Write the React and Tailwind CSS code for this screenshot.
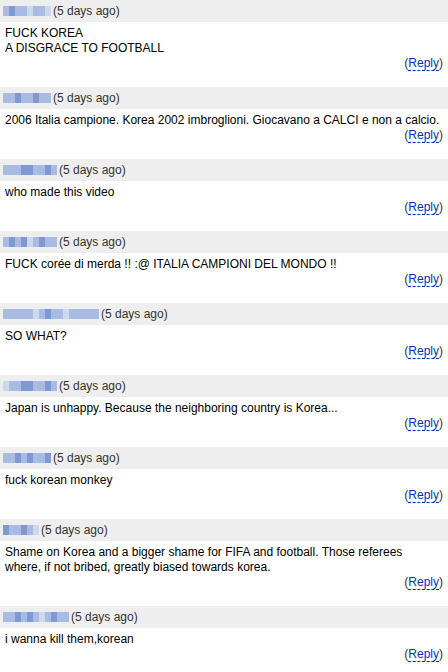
import React from 'react';

const comments = [
  { name: [1, 2, 1, 1, 0, 1, 1, 0], lines: ['FUCK KOREA', 'A DISGRACE TO FOOTBALL'] },
  { name: [1, 1, 2, 1, 1, 2, 1, 1], lines: ['2006 Italia campione. Korea 2002 imbroglioni. Giocavano a CALCI e non a calcio.'] },
  { name: [1, 1, 1, 2, 2, 1, 1, 2, 1], lines: ['who made this video'] },
  { name: [1, 2, 1, 2, 0, 1, 2, 1, 1], lines: ['FUCK corée di merda !! :@ ITALIA CAMPIONI DEL MONDO !!'] },
  { name: [1, 1, 1, 1, 1, 0, 1, 2, 1, 1, 0, 1, 1, 1, 1, 1], lines: ['SO WHAT?'] },
  { name: [0, 1, 1, 2, 2, 1, 1, 2, 1], lines: ['Japan is unhappy. Because the neighboring country is Korea...'] },
  { name: [1, 1, 2, 1, 2, 1, 1, 2], lines: ['fuck korean monkey'] },
  { name: [2, 1, 1, 2, 1, 0], lines: ['Shame on Korea and a bigger shame for FIFA and football. Those referees', 'where, if not bribed, greatly biased towards korea.'] },
  { name: [1, 1, 2, 1, 2, 1, 0, 1, 2, 1, 1], lines: ['i wanna kill them,korean'] },
];

const tones = ['bg-[#cdd8ef]', 'bg-[#a9bbe3]', 'bg-[#7f99d3]'];

function BlurName({ cells }) {
  return (
    <div className="flex h-[10px]">
      {cells.map((t, i) => (
        <span key={i} className={`w-[6px] h-full ${tones[t]}`} />
      ))}
    </div>
  );
}

function Comment({ c }) {
  return (
    <div className="flex flex-col">
      <div className="h-[22px] bg-[#eeeeee] flex items-center pl-[3px] gap-[2px] text-[#333333]">
        <BlurName cells={c.name} />
        <span>(5 days ago)</span>
      </div>
      <div className="pt-[4px] pl-[5px] text-black">
        {c.lines.map((l, i) => (
          <div key={i} className="whitespace-nowrap">{l}</div>
        ))}
      </div>
      <div className="flex justify-end pr-[5px] pb-[16px] text-[#333333]">
        <span>
          (<span className="text-[#0033cc] border-b border-dashed border-[#0033cc]">Reply</span>)
        </span>
      </div>
    </div>
  );
}

export default function App() {
  return (
    <div className="w-[448px] h-[672px] overflow-hidden bg-white text-[12px] leading-[15px] font-['Liberation_Sans',Arial,sans-serif]">
      {comments.map((c, i) => (
        <Comment key={i} c={c} />
      ))}
    </div>
  );
}
